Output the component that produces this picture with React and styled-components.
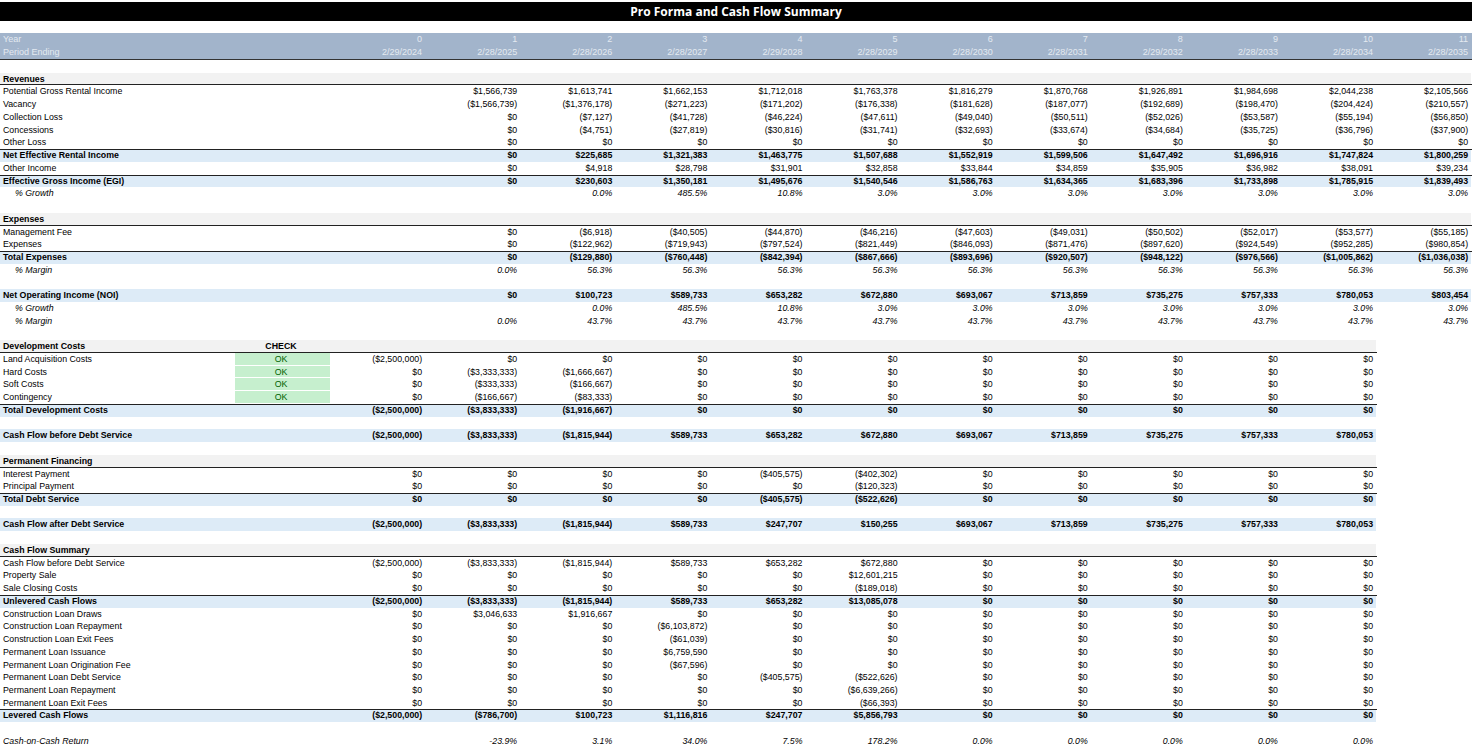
import React from "react";
import styled, { createGlobalStyle, css } from "styled-components";

const Global = createGlobalStyle`
  body { margin: 0; background: #fff; font-family: "Liberation Sans", Arial, sans-serif; }
`;

const Page = styled.div`
  width: 1472px;
  padding-top: 2px;
`;
const Title = styled.div`
  height: 19px;
  background: #000;
  color: #fff;
  font: bold 12px "Open Sans", "Liberation Sans", sans-serif;
  display: flex;
  align-items: center;
  justify-content: center;
`;
const Header = styled.div`
  margin-top: 12px;
  background: #a2b4cb;
  color: #e4eaf1;
  border-bottom: 1px solid #333;
`;
const Grid = styled.div`
  position: relative;
  display: grid;
  grid-template-columns: 235px 95px repeat(12, 95.1px);
  height: 12.74px;
  font-size: 8.8px;
  line-height: 12.74px;
  color: #000;
  ${(p) => p.$bold && css`font-weight: bold;`}
  ${(p) => p.$italic && css`font-style: italic;`}
  ${(p) =>
    p.$line &&
    css`
      &::after {
        content: "";
        position: absolute;
        left: 0;
        width: ${p.$lineW}px;
        height: 1px;
        background: #222;
        ${p.$line === "top" ? "top: 0;" : "bottom: 0;"}
      }
    `}
`;
const HeadGrid = styled(Grid)`
  color: #e4eaf1;
  height: 13px;
  line-height: 13px;
  font-size: 9px;
`;
const Cell = styled.div`
  text-align: ${(p) => (p.$center ? "center" : p.$left ? "left" : "right")};
  padding: ${(p) => (p.$left ? `0 0 0 ${p.$indent ? 15 : 3}px` : "0 3px 0 0")};
  background: ${(p) => p.$bg || "transparent"};
  white-space: nowrap;
  overflow: hidden;
`;
const Check = styled(Cell)`
  background: #c6efce;
  color: #006100;
  text-align: center;
  border-bottom: 1px solid #fff;
`;

const z = (n) => Array(n).fill("$0");
const g3 = (a) => [...a, ...Array(12 - a.length).fill("3.0%")];
const fill = (a, v, n = 12) => [...a, ...Array(n - a.length).fill(v)];

const rows = [
  { t: "blank" },
  { t: "section", l: "Revenues" },
  { l: "Potential Gross Rental Income", v: ["", "$1,566,739", "$1,613,741", "$1,662,153", "$1,712,018", "$1,763,378", "$1,816,279", "$1,870,768", "$1,926,891", "$1,984,698", "$2,044,238", "$2,105,566"] },
  { l: "Vacancy", v: ["", "($1,566,739)", "($1,376,178)", "($271,223)", "($171,202)", "($176,338)", "($181,628)", "($187,077)", "($192,689)", "($198,470)", "($204,424)", "($210,557)"] },
  { l: "Collection Loss", v: ["", "$0", "($7,127)", "($41,728)", "($46,224)", "($47,611)", "($49,040)", "($50,511)", "($52,026)", "($53,587)", "($55,194)", "($56,850)"] },
  { l: "Concessions", v: ["", "$0", "($4,751)", "($27,819)", "($30,816)", "($31,741)", "($32,693)", "($33,674)", "($34,684)", "($35,725)", "($36,796)", "($37,900)"] },
  { l: "Other Loss", v: ["", ...z(11)] },
  { t: "total", l: "Net Effective Rental Income", v: ["", "$0", "$225,685", "$1,321,383", "$1,463,775", "$1,507,688", "$1,552,919", "$1,599,506", "$1,647,492", "$1,696,916", "$1,747,824", "$1,800,259"] },
  { l: "Other Income", v: ["", "$0", "$4,918", "$28,798", "$31,901", "$32,858", "$33,844", "$34,859", "$35,905", "$36,982", "$38,091", "$39,234"] },
  { t: "total", l: "Effective Gross Income (EGI)", v: ["", "$0", "$230,603", "$1,350,181", "$1,495,676", "$1,540,546", "$1,586,763", "$1,634,365", "$1,683,396", "$1,733,898", "$1,785,915", "$1,839,493"] },
  { t: "pct", l: "% Growth", v: g3(["", "", "0.0%", "485.5%", "10.8%"]) },
  { t: "blank" },
  { t: "section", l: "Expenses" },
  { l: "Management Fee", v: ["", "$0", "($6,918)", "($40,505)", "($44,870)", "($46,216)", "($47,603)", "($49,031)", "($50,502)", "($52,017)", "($53,577)", "($55,185)"] },
  { l: "Expenses", v: ["", "$0", "($122,962)", "($719,943)", "($797,524)", "($821,449)", "($846,093)", "($871,476)", "($897,620)", "($924,549)", "($952,285)", "($980,854)"] },
  { t: "total", l: "Total Expenses", v: ["", "$0", "($129,880)", "($760,448)", "($842,394)", "($867,666)", "($893,696)", "($920,507)", "($948,122)", "($976,566)", "($1,005,862)", "($1,036,038)"] },
  { t: "pct", l: "% Margin", v: fill(["", "0.0%"], "56.3%") },
  { t: "blank" },
  { t: "hl", l: "Net Operating Income (NOI)", v: ["", "$0", "$100,723", "$589,733", "$653,282", "$672,880", "$693,067", "$713,859", "$735,275", "$757,333", "$780,053", "$803,454"] },
  { t: "pct", l: "% Growth", v: g3(["", "", "0.0%", "485.5%", "10.8%"]) },
  { t: "pct", l: "% Margin", v: fill(["", "0.0%"], "43.7%") },
  { t: "blank" },
  { t: "section", l: "Development Costs", check: "CHECK", short: 1 },
  { l: "Land Acquisition Costs", ok: 1, short: 1, v: ["($2,500,000)", ...z(10)] },
  { l: "Hard Costs", ok: 1, short: 1, v: ["$0", "($3,333,333)", "($1,666,667)", ...z(8)] },
  { l: "Soft Costs", ok: 1, short: 1, v: ["$0", "($333,333)", "($166,667)", ...z(8)] },
  { l: "Contingency", ok: 1, short: 1, v: ["$0", "($166,667)", "($83,333)", ...z(8)] },
  { t: "total", l: "Total Development Costs", short: 1, v: ["($2,500,000)", "($3,833,333)", "($1,916,667)", ...z(8)] },
  { t: "blank" },
  { t: "hl", l: "Cash Flow before Debt Service", short: 1, v: ["($2,500,000)", "($3,833,333)", "($1,815,944)", "$589,733", "$653,282", "$672,880", "$693,067", "$713,859", "$735,275", "$757,333", "$780,053"] },
  { t: "blank" },
  { t: "section", l: "Permanent Financing", short: 1 },
  { l: "Interest Payment", short: 1, v: [...z(4), "($405,575)", "($402,302)", ...z(5)] },
  { l: "Principal Payment", short: 1, v: [...z(5), "($120,323)", ...z(5)] },
  { t: "total", l: "Total Debt Service", short: 1, v: [...z(4), "($405,575)", "($522,626)", ...z(5)] },
  { t: "blank" },
  { t: "hl", l: "Cash Flow after Debt Service", short: 1, v: ["($2,500,000)", "($3,833,333)", "($1,815,944)", "$589,733", "$247,707", "$150,255", "$693,067", "$713,859", "$735,275", "$757,333", "$780,053"] },
  { t: "blank" },
  { t: "section", l: "Cash Flow Summary", short: 1 },
  { l: "Cash Flow before Debt Service", short: 1, v: ["($2,500,000)", "($3,833,333)", "($1,815,944)", "$589,733", "$653,282", "$672,880", ...z(5)] },
  { l: "Property Sale", short: 1, v: [...z(5), "$12,601,215", ...z(5)] },
  { l: "Sale Closing Costs", short: 1, v: [...z(5), "($189,018)", ...z(5)] },
  { t: "total", l: "Unlevered Cash Flows", short: 1, v: ["($2,500,000)", "($3,833,333)", "($1,815,944)", "$589,733", "$653,282", "$13,085,078", ...z(5)] },
  { l: "Construction Loan Draws", short: 1, v: ["$0", "$3,046,633", "$1,916,667", ...z(8)] },
  { l: "Construction Loan Repayment", short: 1, v: [...z(3), "($6,103,872)", ...z(7)] },
  { l: "Construction Loan Exit Fees", short: 1, v: [...z(3), "($61,039)", ...z(7)] },
  { l: "Permanent Loan Issuance", short: 1, v: [...z(3), "$6,759,590", ...z(7)] },
  { l: "Permanent Loan Origination Fee", short: 1, v: [...z(3), "($67,596)", ...z(7)] },
  { l: "Permanent Loan Debt Service", short: 1, v: [...z(4), "($405,575)", "($522,626)", ...z(5)] },
  { l: "Permanent Loan Repayment", short: 1, v: [...z(5), "($6,639,266)", ...z(5)] },
  { l: "Permanent Loan Exit Fees", short: 1, v: [...z(5), "($66,393)", ...z(5)] },
  { t: "total", l: "Levered Cash Flows", short: 1, v: ["($2,500,000)", "($786,700)", "$100,723", "$1,116,816", "$247,707", "$5,856,793", ...z(5)] },
  { t: "blank" },
  { t: "coc", l: "Cash-on-Cash Return", short: 1, v: ["", "-23.9%", "3.1%", "34.0%", "7.5%", "178.2%", ...Array(5).fill("0.0%")] },
];

const BLUE = "#ddebf7";
const GRAY = "#f2f2f2";

function Row({ r }) {
  const t = r.t || "normal";
  if (t === "blank") return <Grid />;
  const bg = t === "section" ? GRAY : t === "total" || t === "hl" ? BLUE : undefined;
  const bold = ["section", "total", "hl"].includes(t);
  const italic = t === "pct" || t === "coc";
  const vals = r.v || Array(12).fill("");
  const width = r.short ? 11 : 12;
  const line = t === "total" ? "top" : t === "section" ? "bottom" : undefined;
  return (
    <Grid $bold={bold} $italic={italic} $line={line} $lineW={r.short ? 1377 : 1472}>
      <Cell $left $indent={t === "pct"} $bg={bg}>{r.l}</Cell>
      {r.ok ? <Check>OK</Check> : <Cell $center $bg={bg}>{r.check || ""}</Cell>}
      {vals.map((v, i) => (
        <Cell key={i} $bg={i < width ? bg : undefined}>{v}</Cell>
      ))}
    </Grid>
  );
}

export default function App() {
  const years = Array.from({ length: 12 }, (_, i) => i);
  const dates = ["2/29/2024", "2/28/2025", "2/28/2026", "2/28/2027", "2/29/2028", "2/28/2029", "2/28/2030", "2/28/2031", "2/29/2032", "2/28/2033", "2/28/2034", "2/28/2035"];
  return (
    <Page>
      <Global />
      <Title>Pro Forma and Cash Flow Summary</Title>
      <Header>
        <HeadGrid>
          <Cell $left>Year</Cell><Cell />
          {years.map((y) => <Cell key={y}>{y}</Cell>)}
        </HeadGrid>
        <HeadGrid>
          <Cell $left>Period Ending</Cell><Cell />
          {dates.map((d) => <Cell key={d}>{d}</Cell>)}
        </HeadGrid>
      </Header>
      {rows.map((r, i) => <Row key={i} r={r} />)}
    </Page>
  );
}
